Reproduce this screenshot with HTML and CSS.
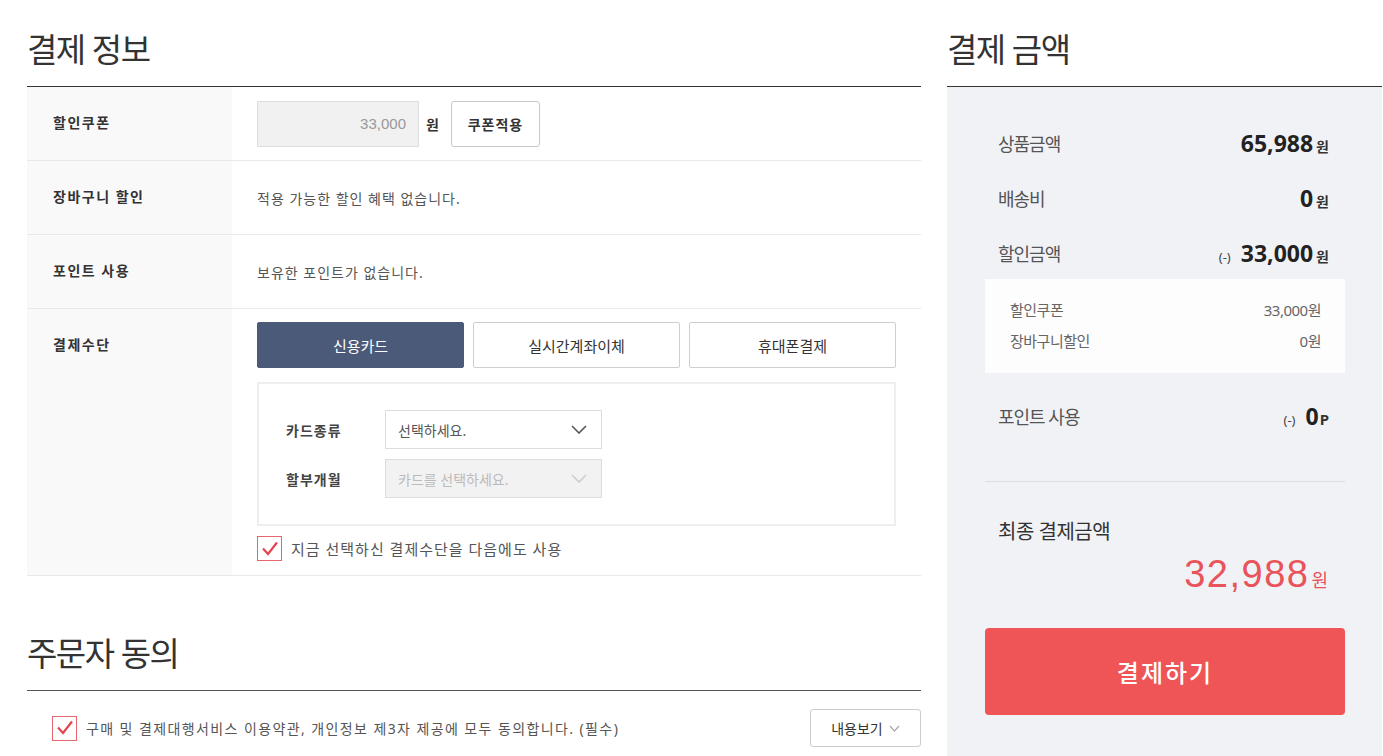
FILE: index.html
```html
<!DOCTYPE html>
<html lang="ko">

<head>
    <meta charset="UTF-8">
    <meta name="viewport" content="width=device-width, initial-scale=1.0">
    <title>주문/결제</title>
    <link rel="stylesheet" href="styles.css">
</head>

<body>
    <div class="page">
        <div class="main-col">
            <h2 class="sec-title">결제 정보</h2>
            <div class="info-table">
                <div class="info-row">
                    <div class="info-label">할인쿠폰</div>
                    <div class="info-cell">
                        <input type="text" class="coupon-input" value="33,000" disabled>
                        <span class="won-unit">원</span>
                        <button type="button" class="btn-line">쿠폰적용</button>
                    </div>
                </div>
                <div class="info-row">
                    <div class="info-label">장바구니 할인</div>
                    <div class="info-cell">
                        <p class="info-text">적용 가능한 할인 혜택 없습니다.</p>
                    </div>
                </div>
                <div class="info-row">
                    <div class="info-label">포인트 사용</div>
                    <div class="info-cell">
                        <p class="info-text">보유한 포인트가 없습니다.</p>
                    </div>
                </div>
                <div class="info-row">
                    <div class="info-label">결제수단</div>
                    <div class="info-cell pay-cell">
                        <div class="pay-tabs">
                            <button type="button" class="pay-tab active">신용카드</button>
                            <button type="button" class="pay-tab">실시간계좌이체</button>
                            <button type="button" class="pay-tab">휴대폰결제</button>
                        </div>
                        <div class="card-box">
                            <div class="card-row">
                                <span class="card-label">카드종류</span>
                                <div class="select-box">
                                    <span>선택하세요.</span>
                                    <svg width="16" height="9" viewBox="0 0 16 9"><polyline points="1,1 8,8 15,1" fill="none" stroke="#555" stroke-width="1.6"/></svg>
                                </div>
                            </div>
                            <div class="card-row">
                                <span class="card-label">할부개월</span>
                                <div class="select-box disabled">
                                    <span>카드를 선택하세요.</span>
                                    <svg width="16" height="9" viewBox="0 0 16 9"><polyline points="1,1 8,8 15,1" fill="none" stroke="#ccc" stroke-width="1.6"/></svg>
                                </div>
                            </div>
                        </div>
                        <label class="check-line">
                            <span class="check-box">
                                <svg width="22" height="22" viewBox="0 0 22 22"><polyline points="4,10.5 9,16 18,4.5" fill="none" stroke="#e5454f" stroke-width="2.2"/></svg>
                            </span>
                            지금 선택하신 결제수단을 다음에도 사용
                        </label>
                    </div>
                </div>
            </div>

            <h2 class="sec-title agree-title">주문자 동의</h2>
            <div class="agree-table">
                <div class="agree-row">
                    <label class="check-line small">
                        <span class="check-box">
                            <svg width="22" height="22" viewBox="0 0 22 22"><polyline points="4,10.5 9,16 18,4.5" fill="none" stroke="#e5454f" stroke-width="2.2"/></svg>
                        </span>
                        구매 및 결제대행서비스 이용약관, 개인정보 제3자 제공에 모두 동의합니다. (필수)
                    </label>
                    <button type="button" class="btn-view">내용보기
                        <svg width="11" height="7" viewBox="0 0 11 7"><polyline points="1,1 5.5,6 10,1" fill="none" stroke="#aaa" stroke-width="1.2"/></svg>
                    </button>
                </div>
            </div>
        </div>

        <div class="side-col">
            <h2 class="sec-title">결제 금액</h2>
            <div class="sum-box">
                <div class="sum-row">
                    <span class="sum-label">상품금액</span>
                    <span class="sum-value"><b>65,988</b><em>원</em></span>
                </div>
                <div class="sum-row">
                    <span class="sum-label">배송비</span>
                    <span class="sum-value"><b>0</b><em>원</em></span>
                </div>
                <div class="sum-row">
                    <span class="sum-label">할인금액</span>
                    <span class="sum-value"><i>(-)</i><b>33,000</b><em>원</em></span>
                </div>
                <div class="sub-box">
                    <div class="sub-row">
                        <span>할인쿠폰</span>
                        <span>33,000원</span>
                    </div>
                    <div class="sub-row">
                        <span>장바구니할인</span>
                        <span>0원</span>
                    </div>
                </div>
                <div class="sum-row point-row">
                    <span class="sum-label">포인트 사용</span>
                    <span class="sum-value"><i>(-)</i><b>0</b><em class="pt">P</em></span>
                </div>
                <div class="total">
                    <p class="total-label">최종 결제금액</p>
                    <p class="total-value"><span>32,988</span>원</p>
                </div>
                <button type="button" class="btn-pay">결제하기</button>
            </div>
        </div>
    </div>
</body>

</html>
```

FILE: styles.css
```css
body {
    margin: 0;
    padding: 0;
    font-family: "Noto Sans", "Noto Sans CJK KR", sans-serif;
    color: #333;
    background-color: #fff;
}

p {
    margin: 0;
}

.page {
    display: flex;
    gap: 26px;
    padding-left: 27px;
    width: 1382px;
    box-sizing: border-box;
}

.main-col {
    width: 894px;
    flex-shrink: 0;
}

.side-col {
    width: 435px;
    flex-shrink: 0;
}

.sec-title {
    margin: 0;
    padding: 28px 0 14px;
    line-height: 44px;
    font-size: 33px;
    font-weight: 400;
    letter-spacing: -1.5px;
    color: #333;
}

.agree-title {
    margin-top: 28px;
}

/* payment info table */
.info-table {
    border-top: 1px solid #333;
}

.info-row {
    display: flex;
    border-bottom: 1px solid #e9e9e9;
}

.info-label {
    width: 205px;
    flex-shrink: 0;
    box-sizing: border-box;
    padding-left: 26px;
    line-height: 72px;
    background-color: #f9f9f9;
    font-size: 14px;
    font-weight: 700;
    letter-spacing: 1.5px;
    color: #333;
}

.info-cell {
    flex: 1;
    display: flex;
    align-items: center;
    padding: 13px 25px;
    min-height: 47px;
}

.info-text {
    font-size: 14px;
    letter-spacing: 1px;
    color: #555;
}

.coupon-input {
    width: 162px;
    height: 46px;
    box-sizing: border-box;
    border: 1px solid #ddd;
    background-color: #f1f1f1;
    padding: 0 12px;
    text-align: right;
    font-family: "Liberation Sans", sans-serif;
    font-size: 15px;
    color: #999;
}

.won-unit {
    margin: 0 12px 0 7px;
    font-size: 14px;
    font-weight: 700;
    color: #333;
}

.btn-line {
    width: 89px;
    height: 46px;
    border: 1px solid #c8c8c8;
    border-radius: 3px;
    background-color: #fff;
    font-family: "Noto Sans CJK KR", sans-serif;
    font-size: 14px;
    font-weight: 700;
    letter-spacing: 1px;
    color: #333;
}

.pay-cell {
    flex-direction: column;
    align-items: stretch;
    padding-bottom: 14px;
}

.pay-tabs {
    display: grid;
    grid-template-columns: repeat(3, 1fr);
    gap: 9px;
}

.pay-tab {
    height: 46px;
    border: 1px solid #cfcfcf;
    border-radius: 2px;
    background-color: #fff;
    font-family: "Noto Sans CJK KR", sans-serif;
    font-size: 15px;
    color: #333;
}

.pay-tab.active {
    background-color: #4b5a78;
    border-color: #4b5a78;
    color: #fff;
}

.card-box {
    margin-top: 14px;
    border: 2px solid #eee;
    padding: 26px 27px;
    display: flex;
    flex-direction: column;
    gap: 10px;
}

.card-row {
    display: flex;
    align-items: center;
}

.card-label {
    width: 99px;
    font-size: 14px;
    font-weight: 700;
    letter-spacing: 1px;
    color: #444;
}

.select-box {
    width: 217px;
    height: 39px;
    box-sizing: border-box;
    border: 1px solid #ddd;
    padding: 0 14px 0 12px;
    display: flex;
    align-items: center;
    justify-content: space-between;
    font-size: 14px;
    color: #555;
    background-color: #fff;
}

.select-box.disabled {
    background-color: #f2f2f2;
    color: #bbb;
}

.check-line {
    display: flex;
    align-items: center;
    gap: 9px;
    margin-top: 10px;
    font-size: 15px;
    letter-spacing: 1px;
    color: #555;
}

.check-box {
    width: 25px;
    height: 25px;
    box-sizing: border-box;
    border: 1px solid #e5676d;
    display: flex;
    align-items: center;
    justify-content: center;
    background-color: #fff;
}

/* agreement */
.agree-table {
    border-top: 1px solid #555;
}

.agree-row {
    display: flex;
    align-items: center;
    justify-content: space-between;
    padding: 18px 0 9px 25px;
}

.check-line.small {
    margin-top: 0;
    font-size: 14px;
    letter-spacing: 1.4px;
}

.btn-view {
    width: 111px;
    height: 38px;
    border: 1px solid #ccc;
    border-radius: 3px;
    background-color: #fff;
    display: flex;
    align-items: center;
    justify-content: center;
    gap: 6px;
    font-family: "Noto Sans CJK KR", sans-serif;
    font-size: 14px;
    color: #333;
}

/* summary */
.sum-box {
    border-top: 1px solid #333;
    background-color: #f1f2f6;
    padding: 28px 37px 40px 38px;
    min-height: 640px;
}

.sum-row {
    height: 55px;
    display: flex;
    align-items: center;
    justify-content: space-between;
    padding: 0 16px 0 13px;
}

.sum-label {
    font-size: 18px;
    letter-spacing: -1px;
    color: #555;
}

.sum-value {
    display: flex;
    align-items: baseline;
}

.sum-value b {
    font-size: 23px;
    font-weight: 700;
    color: #222;
}

.sum-value em {
    font-style: normal;
    font-size: 14px;
    font-weight: 700;
    margin-left: 3px;
    color: #333;
}

.sum-value em.pt {
    font-size: 15px;
    margin-left: 1px;
}

.sum-value i {
    font-style: normal;
    font-size: 13px;
    color: #444;
    margin-right: 10px;
}

.sub-box {
    margin-top: -1px;
    background-color: #fdfdfd;
    padding: 16px 24px 16px 25px;
}

.sub-row {
    display: flex;
    justify-content: space-between;
    line-height: 31px;
    font-size: 15px;
    letter-spacing: -0.5px;
    color: #666;
}

.point-row {
    margin-top: 15px;
}

.total {
    margin-top: 38px;
    border-top: 1px solid #dcdde2;
    padding: 35px 17px 0 13px;
}

.total-label {
    line-height: 30px;
    font-size: 20px;
    letter-spacing: -0.5px;
    color: #333;
}

.total-value {
    text-align: right;
    line-height: 44px;
    margin-top: 5px;
    font-size: 18px;
    color: #e9535a;
}

.total-value span {
    font-family: "Liberation Sans", sans-serif;
    font-size: 38px;
    letter-spacing: 1.5px;
    margin-right: 2px;
}

.btn-pay {
    margin-top: 26px;
    width: 100%;
    height: 87px;
    border: none;
    border-radius: 4px;
    background-color: #ef5556;
    font-family: "Noto Sans CJK KR", sans-serif;
    font-size: 24px;
    font-weight: 500;
    letter-spacing: 2px;
    color: #fff;
}
```
